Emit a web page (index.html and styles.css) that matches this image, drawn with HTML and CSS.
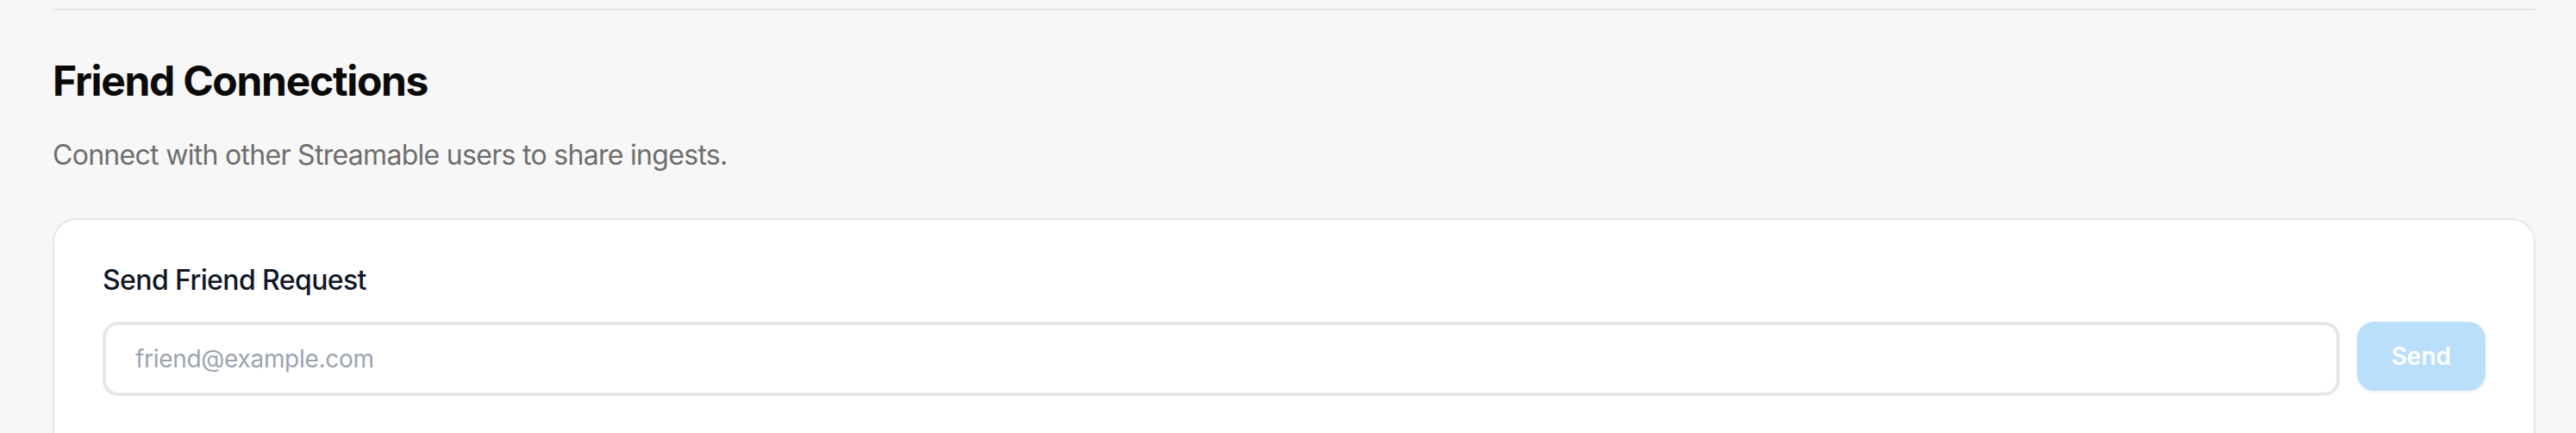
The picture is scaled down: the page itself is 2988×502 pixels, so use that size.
FILE: index.html
```html
<!DOCTYPE html>
<html lang="en">
<head>
    <meta charset="UTF-8">
    <meta name="viewport" content="width=device-width, initial-scale=1.0">
    <title>Friend Connections</title>
    <link rel="stylesheet" href="styles.css">
</head>
<body>

<div class="page">
    <div class="divider"></div>

    <section class="section">
        <h2 class="title">Friend Connections</h2>
        <p class="subtitle">Connect with other Streamable users to share ingests.</p>

        <div class="card">
            <label class="label" for="friendEmail">Send Friend Request</label>
            <div class="request-row">
                <input class="input" id="friendEmail" type="email" placeholder="friend@example.com">
                <button class="send" disabled>Send</button>
            </div>
        </div>
    </section>
</div>

</body>
</html>
```

FILE: styles.css
```css
body {
    margin: 0;
    font-family: Inter, "Noto Sans", sans-serif;
    background-color: #f7f7f7;
    overflow: hidden;
}

.page {
    padding: 10px 47px 0 61px;
}

.divider {
    height: 2px;
    background-color: #e5e5e5;
}

.section {
    padding-top: 50px;
}

.title {
    margin: 0;
    font-size: 48px;
    line-height: 64px;
    font-weight: 700;
    color: #0a0a0a;
    letter-spacing: -1.3px;
}

.subtitle {
    margin: 30px 0 0;
    font-size: 32px;
    line-height: 48px;
    color: #6e6e6e;
    letter-spacing: -0.7px;
}

.card {
    margin-top: 49px;
    background-color: white;
    border: 2px solid #e7e7ea;
    border-radius: 28px;
    padding: 50px 56px 80px;
}

.label {
    display: block;
    font-size: 32px;
    line-height: 40px;
    font-weight: 500;
    color: #111827;
    letter-spacing: -0.6px;
}

.request-row {
    display: flex;
    align-items: flex-start;
    gap: 20px;
    margin-top: 28px;
}

.input {
    flex: 1;
    box-sizing: border-box;
    height: 86px;
    padding: 0 34px;
    border: 4px solid #e5e7eb;
    border-radius: 18px;
    font-family: inherit;
    font-size: 28px;
    letter-spacing: -0.3px;
    color: #111827;
    background-color: white;
    outline: none;
}

.input::placeholder {
    color: #9ca3af;
}

.send {
    height: 80px;
    padding: 0 40px;
    border: none;
    border-radius: 20px;
    background-color: #b9dffa;
    color: white;
    font-family: inherit;
    font-size: 28px;
    font-weight: 600;
    box-shadow: 0 2px 4px rgba(0, 0, 0, 0.06);
}
```
